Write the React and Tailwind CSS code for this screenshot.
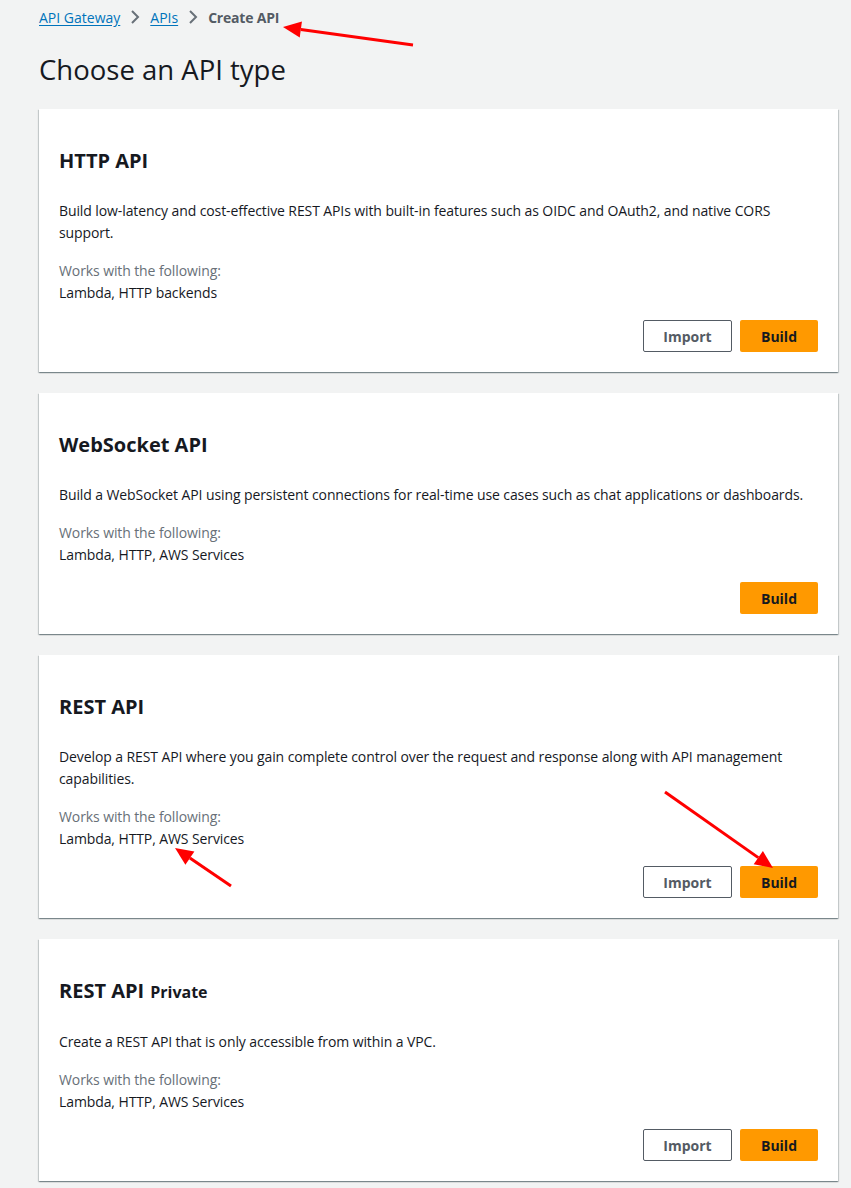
import React from "react";

const Chevron = () => (
  <svg width="16" height="16" viewBox="0 0 16 16" className="mx-[7px] shrink-0">
    <polyline points="5,2 11,8 5,14" fill="none" stroke="#687078" strokeWidth="2" />
  </svg>
);

const Card = ({ title, suffix, desc, works, showImport }) => (
  <div className="bg-white shadow-[0_1px_1px_0_rgba(0,28,36,0.3),1px_1px_1px_0_rgba(0,28,36,0.15),-1px_1px_1px_0_rgba(0,28,36,0.15)] px-5 pt-[40px] pb-5">
    <h2 className="text-[20px] leading-[24px] font-bold text-[#16191f]">
      {title}
      {suffix && <span className="text-[16px] ml-[6px]">{suffix}</span>}
    </h2>
    <p className="mt-[27px] text-[14px] leading-[22px] text-[#16191f] tracking-[-0.1px]">{desc}</p>
    <div className="mt-4 text-[14px] leading-[22px] text-[#687078] tracking-[-0.1px]">Works with the following:</div>
    <div className="text-[14px] leading-[22px] text-[#16191f] tracking-[-0.1px]">{works}</div>
    <div className="mt-4 flex justify-end gap-2">
      {showImport && (
        <button className="h-[32px] w-[89px] border border-[#545b64] rounded-[2px] bg-white text-[14px] font-bold text-[#545b64]">
          Import
        </button>
      )}
      <button className="h-[32px] w-[78px] rounded-[2px] bg-[#ff9900] text-[14px] font-bold text-[#16191f]">
        Build
      </button>
    </div>
  </div>
);

const Arrow = ({ x1, y1, x2, y2 }) => {
  const dx = x2 - x1, dy = y2 - y1;
  const len = Math.hypot(dx, dy);
  const ux = dx / len, uy = dy / len;
  const hl = 18, hw = 8;
  const bx = x2 - ux * hl, by = y2 - uy * hl;
  const p1 = `${bx - uy * hw},${by + ux * hw}`;
  const p2 = `${bx + uy * hw},${by - ux * hw}`;
  return (
    <g>
      <line x1={x1} y1={y1} x2={bx} y2={by} stroke="#ff0000" strokeWidth="3" />
      <polygon points={`${x2},${y2} ${p1} ${p2}`} fill="#ff0000" />
    </g>
  );
};

export default function App() {
  return (
    <div
      className="relative min-h-[1188px] bg-[#f2f3f3] pl-[39px] pr-[13px] pt-[7px]"
      style={{ fontFamily: '"Open Sans", "Noto Sans", Arial, sans-serif' }}
    >
      <nav className="flex items-center h-[20px] text-[14px]">
        <a className="text-[#0073bb] underline underline-offset-2">API Gateway</a>
        <Chevron />
        <a className="text-[#0073bb] underline underline-offset-2">APIs</a>
        <Chevron />
        <span className="font-bold text-[#545b64] tracking-[-0.2px]">Create API</span>
      </nav>
      <h1 className="mt-[26px] text-[27.5px] leading-[34px] text-[#16191f]">Choose an API type</h1>
      <div className="mt-[22px] flex flex-col gap-[21px]">
        <Card
          title="HTTP API"
          desc="Build low-latency and cost-effective REST APIs with built-in features such as OIDC and OAuth2, and native CORS support."
          works="Lambda, HTTP backends"
          showImport
        />
        <Card
          title="WebSocket API"
          desc="Build a WebSocket API using persistent connections for real-time use cases such as chat applications or dashboards."
          works="Lambda, HTTP, AWS Services"
        />
        <Card
          title="REST API"
          desc="Develop a REST API where you gain complete control over the request and response along with API management capabilities."
          works="Lambda, HTTP, AWS Services"
          showImport
        />
        <Card
          title="REST API"
          suffix="Private"
          desc="Create a REST API that is only accessible from within a VPC."
          works="Lambda, HTTP, AWS Services"
          showImport
        />
      </div>
      <svg className="absolute left-0 top-0 pointer-events-none" width="851" height="1188">
        <Arrow x1={413} y1={45} x2={283} y2={27} />
        <Arrow x1={665} y1={792} x2={773} y2={868} />
        <Arrow x1={231} y1={886} x2={175} y2={848} />
      </svg>
    </div>
  );
}
